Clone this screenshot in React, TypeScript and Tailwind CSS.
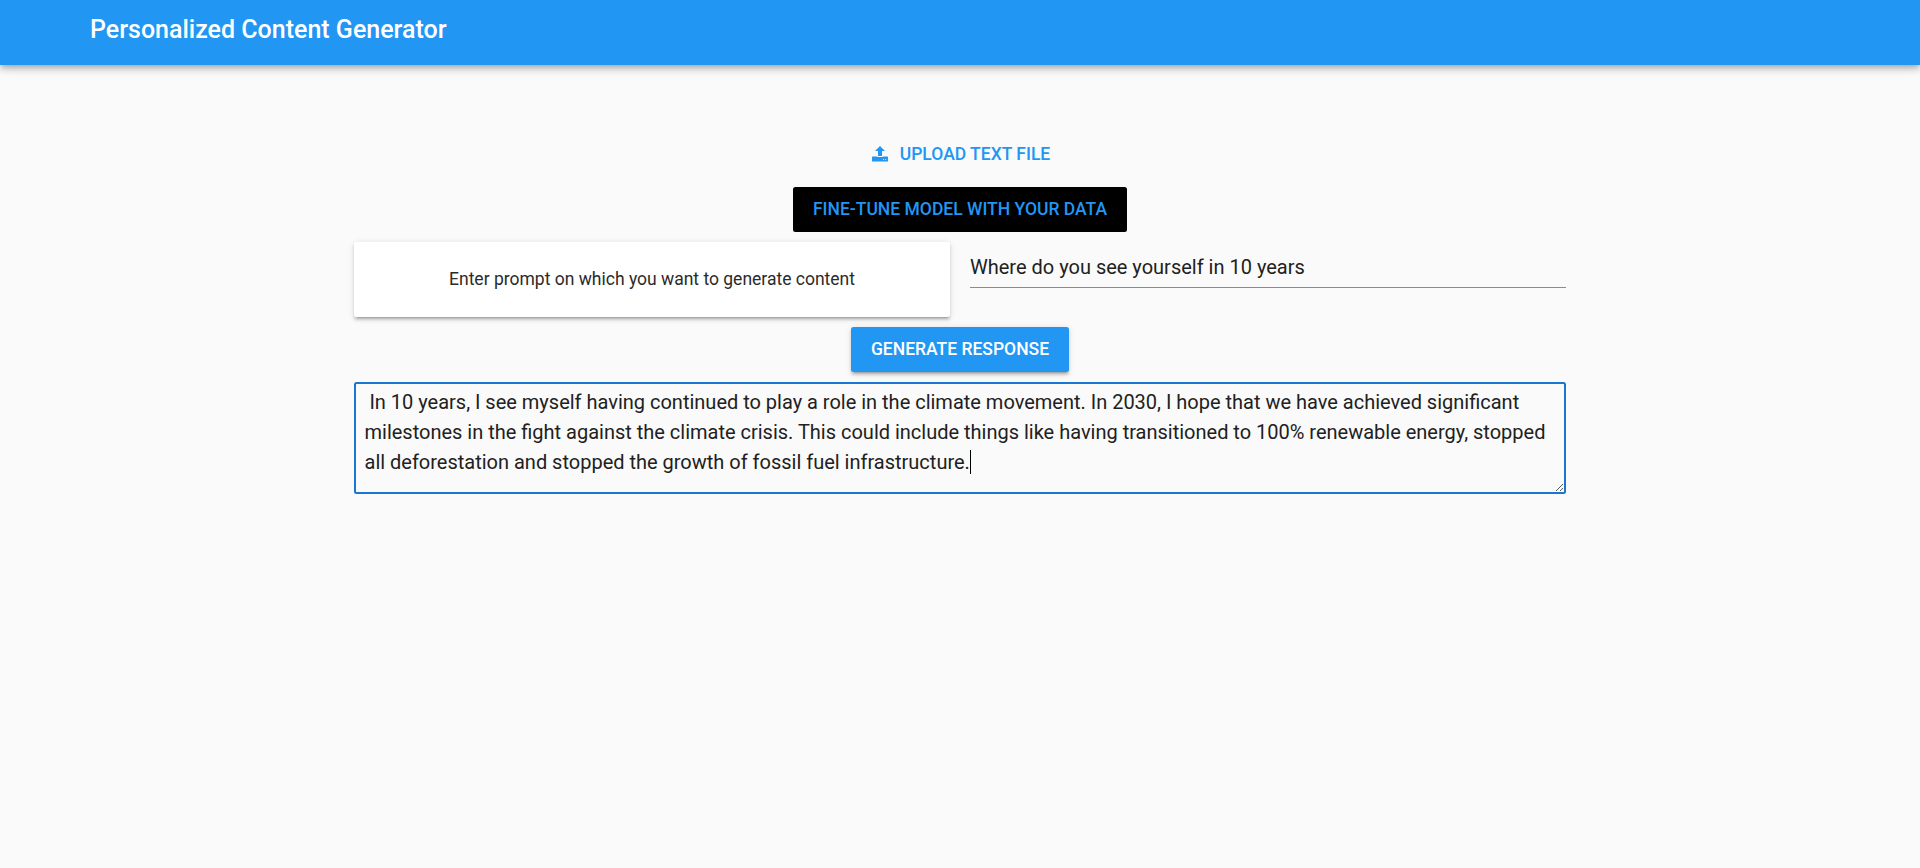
import React from "react";

function UploadIcon() {
  return (
    <svg viewBox="0 0 16 16" fill="currentColor" className="-mt-px mr-3 h-4 w-4">
      <path d="M8 0L13 5H10V9.500Q10 10 9.500 10H6.500Q6 10 6 9.500V5H3L8 0Z" />
      <path
        fillRule="evenodd"
        d="M.6 10.500H5.200Q5.400 11 6.200 11H9.800Q10.600 11 10.800 10.500H15.400Q16 10.500 16 11.100V14.900Q16 15.500 15.400 15.500H.6Q0 15.500 0 14.900V11.100Q0 10.500.6 10.500ZM11.200 13V13.900H12V13ZM13.400 13V13.900H14.200V13Z"
      />
    </svg>
  );
}

const raised =
  "shadow-[0_3.75px_1.25px_-2.5px_rgba(0,0,0,0.2),0_2.5px_2.5px_0_rgba(0,0,0,0.14),0_1.25px_6.25px_0_rgba(0,0,0,0.12)]";

export default function App() {
  const [prompt, setPrompt] = React.useState("Where do you see yourself in 10 years");
  return (
    <div className="min-h-screen bg-[#fafafa] font-[Roboto,sans-serif] text-[#212121]">
      <header className="h-[65px] bg-[#2196f3] px-[90px] pt-3.5 shadow-[0_2.5px_5px_-1.25px_rgba(0,0,0,0.2),0_5px_6.25px_0_rgba(0,0,0,0.14),0_1.25px_12.5px_0_rgba(0,0,0,0.12)]">
        <h1 className="text-[25px] leading-8 font-medium text-white">Personalized Content Generator</h1>
      </header>
      <main className="mx-auto flex w-[1212px] flex-col items-center pt-[67px]">
        <button className="flex h-[45px] items-center pr-5 pl-[22px] text-[17.5px] font-medium text-[#2196f3]">
          <UploadIcon />
          UPLOAD TEXT FILE
        </button>
        <button className="mt-2.5 flex h-[45px] items-center rounded-[2.5px] bg-black px-5 text-[17.5px] font-medium text-[#2196f3]">
          FINE-TUNE MODEL WITH YOUR DATA
        </button>
        <div className="mt-2.5 flex w-full gap-5">
          <div className={`flex h-[75px] flex-1 items-center justify-center rounded-[2.5px] bg-white text-[17.5px] text-[#2b2b2b] ${raised}`}>
            Enter prompt on which you want to generate content
          </div>
          <input
            value={prompt}
            onChange={(e) => setPrompt(e.target.value)}
            className="h-[46px] min-w-0 flex-1 border-b border-[#8c8c8c] pt-1 text-xl outline-none"
          />
        </div>
        <button className={`mt-2.5 flex h-[45px] items-center rounded-[2.5px] bg-[#2196f3] px-5 text-[17.5px] font-medium text-white ${raised}`}>
          GENERATE RESPONSE
        </button>
        <div className="relative mt-2.5 h-[112px] w-full rounded-[2.5px] border-2 border-[#1976d2] pt-[3px] pr-2 pl-[8.5px] text-xl leading-[30px] [word-spacing:-0.04px] whitespace-pre-wrap">
          {" In 10 years, I see myself having continued to play a role in the climate movement. In 2030, I hope that we have achieved significant milestones in the fight against the climate crisis. This could include things like having transitioned to 100% renewable energy, stopped all deforestation and stopped the growth of fossil fuel infrastructure."}
          <span className="inline-block h-6 w-px bg-black align-[-5px]" />
          <svg className="absolute right-0 bottom-0 h-2.5 w-2.5" viewBox="0 0 10 10" stroke="#555">
            <path d="M2 9L9 2M6 9L9 6" />
          </svg>
        </div>
      </main>
    </div>
  );
}
